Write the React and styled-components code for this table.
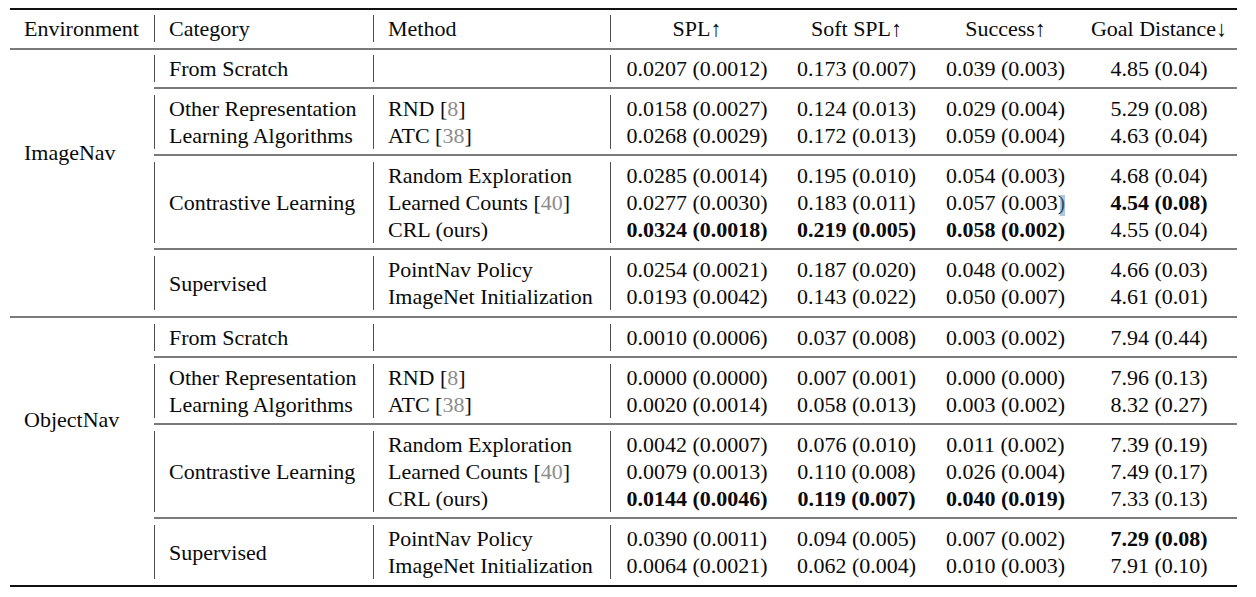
import React from 'react';
import styled, { createGlobalStyle } from 'styled-components';

const Global = createGlobalStyle`
  html, body { margin: 0; padding: 0; background: #fff; }
  body { font-family: "Liberation Serif", "Times New Roman", serif; color: #000; }
`;

const Page = styled.div`
  padding: 8px 0 0 10px;
`;

const Table = styled.table`
  width: 1227px;
  table-layout: fixed;
  border-collapse: separate;
  border-spacing: 0;
  font-size: 22px;
  line-height: 27px;
  color: #0a0a0a;
`;

const DataRow = styled.tr`
  height: 27px;
`;

const Cell = styled.td`
  padding: 0 0 0 ${(p) => (p.$align === 'center' ? 0 : 14)}px;
  padding-top: ${(p) => (p.$offset ? `${p.$offset}px` : 0)};
  text-align: ${(p) => p.$align || 'left'};
  vertical-align: ${(p) => (p.$offset ? 'top' : 'middle')};
  border-left: ${(p) => (p.$bar ? '1px solid #4e4e4e' : 'none')};
  white-space: nowrap;
  font-weight: 400;
`;

const Value = styled.span`
  font-weight: ${(p) => (p.$bold ? 700 : 400)};
`;

const RuleCell = styled.td`
  padding: 0;
`;

const Rule = styled.div`
  margin: ${(p) => p.$above}px 0 ${(p) => p.$below}px;
  height: 2px;
  background: ${(p) => (p.$heavy ? '#111' : '#7a7a7a')};
`;

const Cite = styled.span`
  color: #8c8c8c;
`;

const Sel = styled.span`
  position: relative;
  &::after {
    content: '';
    position: absolute;
    left: 2px;
    top: 5px;
    width: 5px;
    height: 21px;
    background: rgba(90, 145, 200, 0.5);
  }
`;

const COLS = [144, 219, 237, 173, 147, 151, 156];

const groups = [
  {
    env: 'ImageNav',
    offset: 84,
    cats: [
      {
        name: ['From Scratch'],
        rows: [{ m: null, v: ['0.0207 (0.0012)', '0.173 (0.007)', '0.039 (0.003)', '4.85 (0.04)'] }],
      },
      {
        name: ['Other Representation', 'Learning Algorithms'],
        rows: [
          { m: 'RND', c: '8', v: ['0.0158 (0.0027)', '0.124 (0.013)', '0.029 (0.004)', '5.29 (0.08)'] },
          { m: 'ATC', c: '38', v: ['0.0268 (0.0029)', '0.172 (0.013)', '0.059 (0.004)', '4.63 (0.04)'] },
        ],
      },
      {
        name: ['Contrastive Learning'],
        rows: [
          { m: 'Random Exploration', v: ['0.0285 (0.0014)', '0.195 (0.010)', '0.054 (0.003)', '4.68 (0.04)'] },
          { m: 'Learned Counts', c: '40', hl: 2, v: ['0.0277 (0.0030)', '0.183 (0.011)', '0.057 (0.003)', '*4.54 (0.08)'] },
          { m: 'CRL (ours)', v: ['*0.0324 (0.0018)', '*0.219 (0.005)', '*0.058 (0.002)', '4.55 (0.04)'] },
        ],
      },
      {
        name: ['Supervised'],
        rows: [
          { m: 'PointNav Policy', v: ['0.0254 (0.0021)', '0.187 (0.020)', '0.048 (0.002)', '4.66 (0.03)'] },
          { m: 'ImageNet Initialization', v: ['0.0193 (0.0042)', '0.143 (0.022)', '0.050 (0.007)', '4.61 (0.01)'] },
        ],
      },
    ],
  },
  {
    env: 'ObjectNav',
    offset: 82,
    cats: [
      {
        name: ['From Scratch'],
        rows: [{ m: null, v: ['0.0010 (0.0006)', '0.037 (0.008)', '0.003 (0.002)', '7.94 (0.44)'] }],
      },
      {
        name: ['Other Representation', 'Learning Algorithms'],
        rows: [
          { m: 'RND', c: '8', v: ['0.0000 (0.0000)', '0.007 (0.001)', '0.000 (0.000)', '7.96 (0.13)'] },
          { m: 'ATC', c: '38', v: ['0.0020 (0.0014)', '0.058 (0.013)', '0.003 (0.002)', '8.32 (0.27)'] },
        ],
      },
      {
        name: ['Contrastive Learning'],
        rows: [
          { m: 'Random Exploration', v: ['0.0042 (0.0007)', '0.076 (0.010)', '0.011 (0.002)', '7.39 (0.19)'] },
          { m: 'Learned Counts', c: '40', v: ['0.0079 (0.0013)', '0.110 (0.008)', '0.026 (0.004)', '7.49 (0.17)'] },
          { m: 'CRL (ours)', v: ['*0.0144 (0.0046)', '*0.119 (0.007)', '*0.040 (0.019)', '7.33 (0.13)'] },
        ],
      },
      {
        name: ['Supervised'],
        rows: [
          { m: 'PointNav Policy', v: ['0.0390 (0.0011)', '0.094 (0.005)', '0.007 (0.002)', '*7.29 (0.08)'] },
          { m: 'ImageNet Initialization', v: ['0.0064 (0.0021)', '0.062 (0.004)', '0.010 (0.003)', '7.91 (0.10)'] },
        ],
      },
    ],
  },
];

function renderValue(s, hl) {
  const bold = s.startsWith('*');
  const t = bold ? s.slice(1) : s;
  if (hl) {
    return (
      <Value $bold={bold}>
        {t.slice(0, -1)}
        <Sel>)</Sel>
      </Value>
    );
  }
  return <Value $bold={bold}>{t}</Value>;
}

function Method({ m, c }) {
  if (!m) return null;
  return (
    <>
      {m}
      {c && (
        <>
          {' '}[<Cite>{c}</Cite>]
        </>
      )}
    </>
  );
}

function Group({ g }) {
  const rowCount = g.cats.reduce((a, c) => a + c.rows.length, 0) + g.cats.length - 1;
  const out = [];
  g.cats.forEach((cat, ci) => {
    if (ci > 0) {
      out.push(
        <tr key={`r${ci}`}>
          <RuleCell colSpan={6}>
            <Rule $above={5} $below={6} />
          </RuleCell>
        </tr>
      );
    }
    cat.rows.forEach((r, ri) => {
      out.push(
        <DataRow key={`${ci}-${ri}`}>
          {ci === 0 && ri === 0 && (
            <Cell rowSpan={rowCount} $offset={g.offset}>
              {g.env}
            </Cell>
          )}
          {ri === 0 && (
            <Cell rowSpan={cat.rows.length} $bar>
              {cat.name.map((n, i) => (
                <React.Fragment key={i}>
                  {i > 0 && <br />}
                  {n}
                </React.Fragment>
              ))}
            </Cell>
          )}
          <Cell $bar>
            <Method m={r.m} c={r.c} />
          </Cell>
          {r.v.map((v, vi) => (
            <Cell key={vi} $align="center" $bar={vi === 0}>
              {renderValue(v, r.hl === vi)}
            </Cell>
          ))}
        </DataRow>
      );
    });
  });
  return <>{out}</>;
}

export default function App() {
  return (
    <>
      <Global />
      <Page>
        <Table>
          <colgroup>
            {COLS.map((w, i) => (
              <col key={i} style={{ width: w }} />
            ))}
          </colgroup>
          <thead>
            <tr>
              <RuleCell colSpan={7}>
                <Rule $heavy $above={0} $below={5} />
              </RuleCell>
            </tr>
            <DataRow>
              <Cell>Environment</Cell>
              <Cell $bar>Category</Cell>
              <Cell $bar>Method</Cell>
              <Cell $bar $align="center">SPL↑</Cell>
              <Cell $align="center">Soft SPL↑</Cell>
              <Cell $align="center">Success↑</Cell>
              <Cell $align="center">Goal Distance↓</Cell>
            </DataRow>
            <tr>
              <RuleCell colSpan={7}>
                <Rule $above={6} $below={5} />
              </RuleCell>
            </tr>
          </thead>
          <tbody>
            <Group g={groups[0]} />
            <tr>
              <RuleCell colSpan={7}>
                <Rule $above={6} $below={6} />
              </RuleCell>
            </tr>
            <Group g={groups[1]} />
            <tr>
              <RuleCell colSpan={7}>
                <Rule $heavy $above={6} $below={0} />
              </RuleCell>
            </tr>
          </tbody>
        </Table>
      </Page>
    </>
  );
}
